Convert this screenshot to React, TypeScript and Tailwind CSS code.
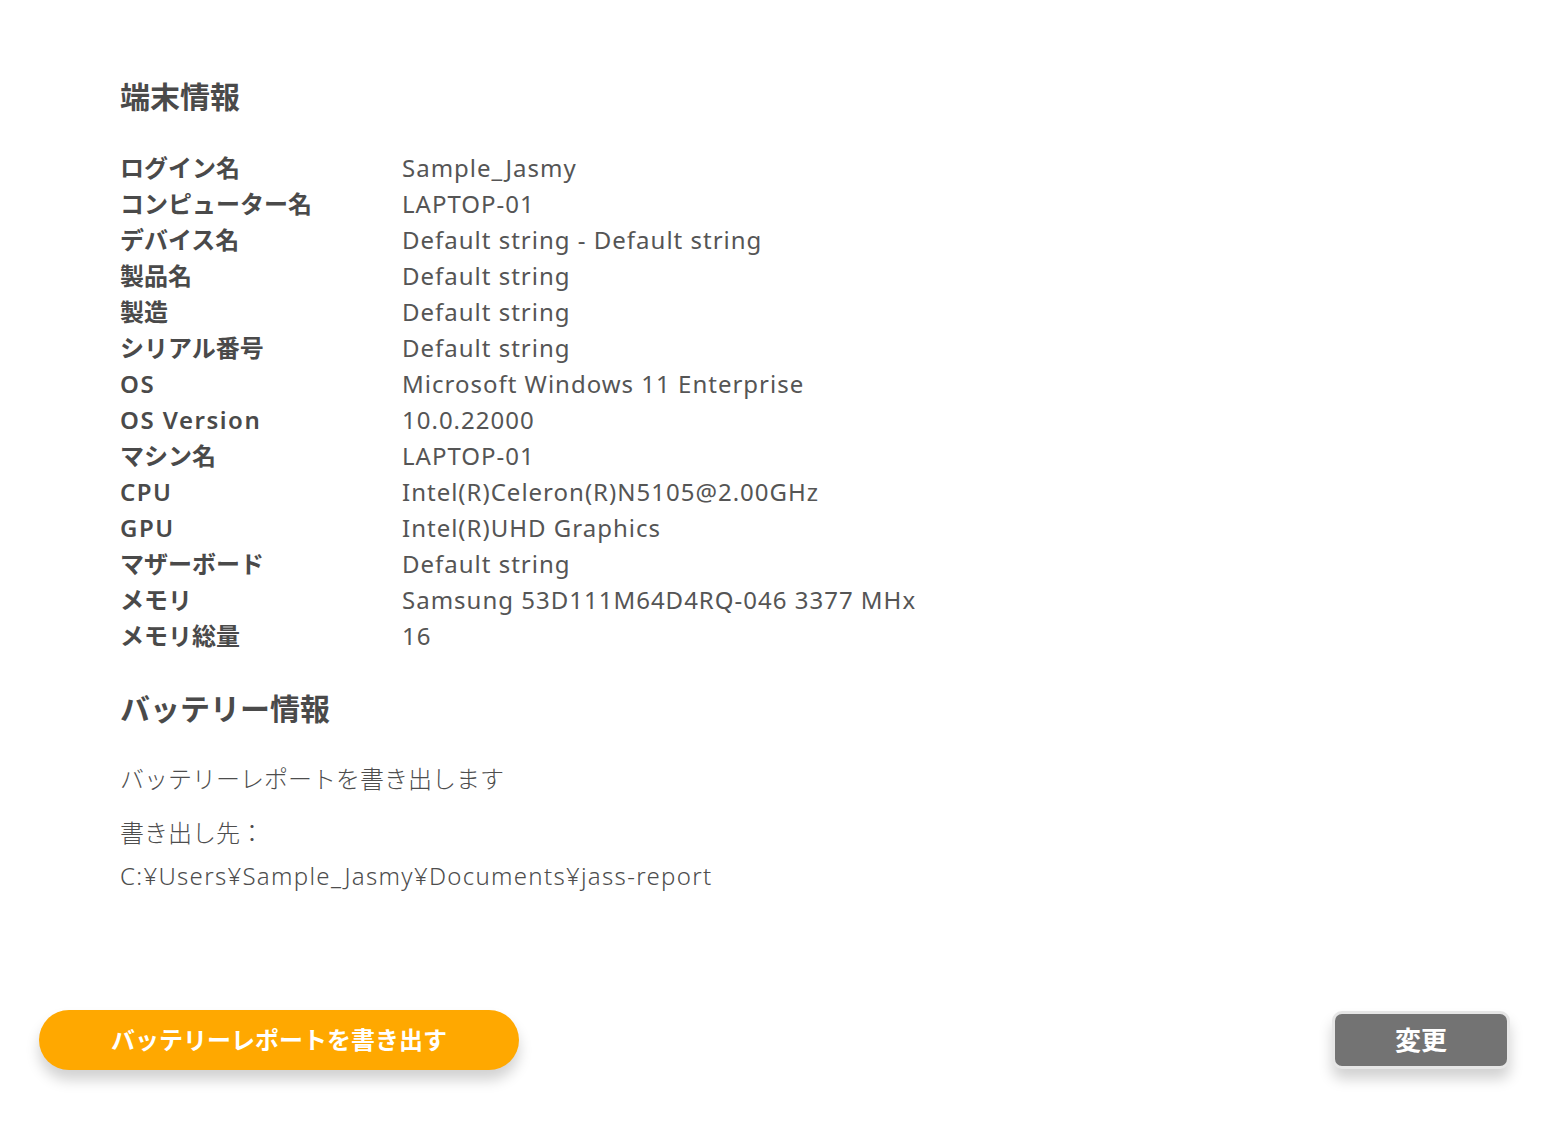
import React from "react";

const rows: [string, string][] = [
  ["ログイン名", "Sample_Jasmy"],
  ["コンピューター名", "LAPTOP-01"],
  ["デバイス名", "Default string - Default string"],
  ["製品名", "Default string"],
  ["製造", "Default string"],
  ["シリアル番号", "Default string"],
  ["OS", "Microsoft Windows 11 Enterprise"],
  ["OS Version", "10.0.22000"],
  ["マシン名", "LAPTOP-01"],
  ["CPU", "Intel(R)Celeron(R)N5105@2.00GHz"],
  ["GPU", "Intel(R)UHD Graphics"],
  ["マザーボード", "Default string"],
  ["メモリ", "Samsung 53D111M64D4RQ-046 3377 MHx"],
  ["メモリ総量", "16"],
];

const isAscii = (s: string) => /^[\x00-\x7f]+$/.test(s);

export default function App() {
  return (
    <div
      className="flex h-[1140px] w-full flex-col bg-white text-[#4a4a4a]"
      style={{ fontFamily: '"Noto Sans", "Noto Sans CJK JP", sans-serif' }}
    >
      <div className="pl-[120px] pt-[77px]">
        <h1 className="text-[30px] font-bold leading-[40px] text-[#4a4a4a]">端末情報</h1>
        <div className="mt-[33px] flex flex-col">
          {rows.map(([k, v]) => (
            <div key={k} className="flex h-[36px] items-center text-[24px]">
              <div
                className={
                  isAscii(k)
                    ? "w-[282px] font-semibold tracking-[1.5px] text-[#4a4a4a]"
                    : "w-[282px] font-semibold text-[#4a4a4a]"
                }
              >
                {k}
              </div>
              <div className="font-normal tracking-[1px] text-[#555555]">{v}</div>
            </div>
          ))}
        </div>
        <h2 className="mt-[35px] text-[30px] font-bold leading-[40px] text-[#4a4a4a]">バッテリー情報</h2>
        <p className="mt-[34px] text-[24px] font-light leading-[32px] text-[#4d4d4d]">バッテリーレポートを書き出します</p>
        <p className="mt-[16px] text-[24px] font-light leading-[43px] text-[#4d4d4d]">書き出し先：</p>
        <p className="text-[24px] font-light leading-[43px] tracking-[1.3px] text-[#4d4d4d]">C:¥Users¥Sample_Jasmy¥Documents¥jass-report</p>
      </div>
      <div className="mt-auto flex items-center justify-between pb-[70px] pl-[39px] pr-[50px]">
        <button className="flex h-[60px] w-[480px] items-center justify-center rounded-full bg-[#ffa800] text-[24px] font-bold text-white shadow-[0_10px_14px_rgba(0,0,0,0.18)]">
          バッテリーレポートを書き出す
        </button>
        <button className="flex h-[58px] w-[178px] items-center justify-center rounded-[10px] border-[3px] border-[#e6e6e6] bg-[#737373] text-[26px] font-bold text-white shadow-[0_10px_14px_rgba(0,0,0,0.18)]">
          変更
        </button>
      </div>
    </div>
  );
}
